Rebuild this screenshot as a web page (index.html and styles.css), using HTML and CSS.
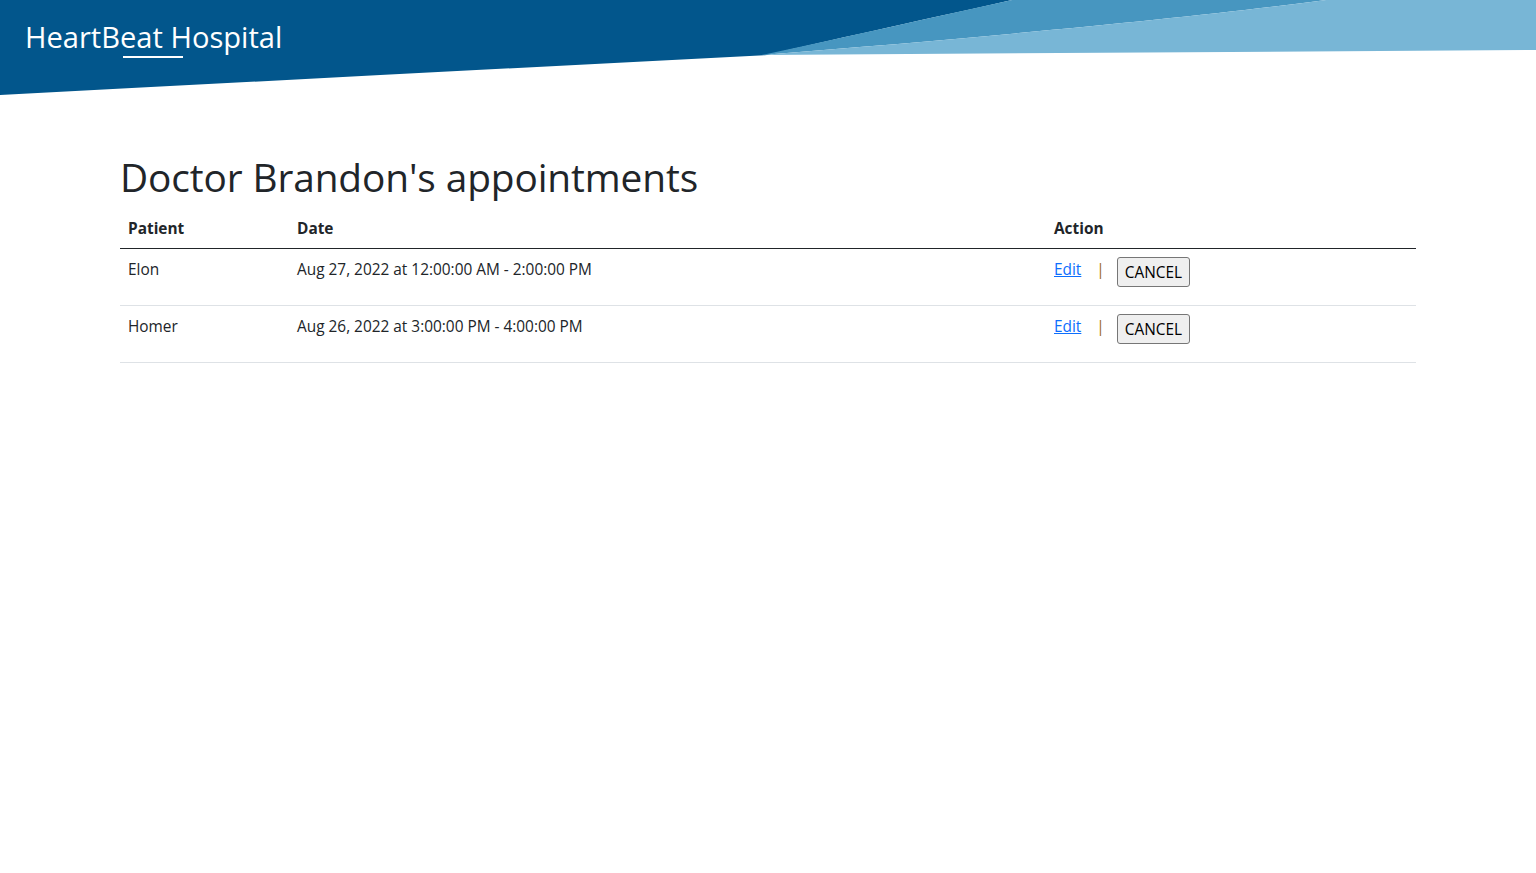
FILE: index.html
```html
<!DOCTYPE html>
<html lang="en">
<head>
<meta charset="utf-8">
<title>HeartBeat Hospital</title>
<link rel="stylesheet" href="styles.css">
</head>
<body>
<header class="site-header">
  <svg class="header-bg" viewBox="0 0 1536 96" preserveAspectRatio="none" aria-hidden="true">
    <path fill="#02568c" d="M0,0 H1012 C905,24 830,40 767,55 Q380,75 0,95 Z"/>
    <path fill="#4796c0" d="M1012,0 H1326 C1200,17 1000,36 762,55 C850,36 930,18 1012,0 Z"/>
    <path fill="#78b6d6" d="M1326,0 H1536 V50 L762,55 C1000,36 1200,17 1326,0 Z"/>
  </svg>
  <a class="brand" href="#">HeartBeat Hospital<span class="brand-bar"></span></a>
</header>
<main class="container">
  <h1 class="page-title">Doctor Brandon's appointments</h1>
  <table class="appt-table">
    <thead>
      <tr>
        <th class="col-patient">Patient</th>
        <th class="col-date">Date</th>
        <th class="col-action">Action</th>
      </tr>
    </thead>
    <tbody>
      <tr>
        <td>Elon</td>
        <td>Aug 27, 2022 at 12:00:00 AM - 2:00:00 PM</td>
        <td><div class="actions"><a href="#" class="edit-link">Edit</a><span class="sep">|</span><button class="cancel-btn" type="button">CANCEL</button></div></td>
      </tr>
      <tr>
        <td>Homer</td>
        <td>Aug 26, 2022 at 3:00:00 PM - 4:00:00 PM</td>
        <td><div class="actions"><a href="#" class="edit-link">Edit</a><span class="sep">|</span><button class="cancel-btn" type="button">CANCEL</button></div></td>
      </tr>
    </tbody>
  </table>
</main>
</body>
</html>
```
FILE: styles.css
```css
* { box-sizing: border-box; }
html, body { margin: 0; padding: 0; }
body {
  font-family: "Open Sans", "Noto Sans", sans-serif;
  font-size: 15.4px;
  line-height: 24px;
  color: #212529;
  background: #fff;
}
.site-header {
  position: relative;
  height: 96px;
  display: flex;
  align-items: flex-start;
  padding: 17px 25px 0;
}
.header-bg {
  position: absolute;
  left: 0;
  top: 0;
  width: 100%;
  height: 96px;
  display: block;
}
.brand {
  position: relative;
  color: #fff;
  text-decoration: none;
  font-size: 29.1px;
  line-height: 40px;
}
.brand-bar {
  position: absolute;
  left: 98px;
  top: 39px;
  width: 60px;
  height: 2px;
  background: #fff;
}
.container {
  width: 1296px;
  margin: 0 auto;
  padding-top: 58px;
}
.page-title {
  margin: 0 0 8px 0;
  font-size: 38.8px;
  font-weight: 400;
  line-height: 46px;
  letter-spacing: -0.1px;
}
.appt-table {
  width: 100%;
  border-collapse: collapse;
}
.appt-table th {
  text-align: left;
  font-weight: 700;
  padding: 9px 8px 7px;
  height: 40px;
  border-bottom: 1px solid #212529;
}
.col-patient { width: 169px; }
.col-date { width: 757px; }
.appt-table td {
  padding: 9px 8px 7px;
  height: 57px;
  vertical-align: top;
  border-bottom: 1px solid #dee2e6;
}
.actions {
  display: flex;
  align-items: flex-start;
}
.edit-link {
  color: #0d6efd;
  text-decoration: underline;
}
.sep {
  margin: 0 12px 0 15px;
  color: #9a6a20;
}
.cancel-btn {
  font-family: "Open Sans", "Noto Sans", sans-serif;
  font-size: 15.4px;
  color: #000;
  background: #efefef;
  border: 1px solid #767676;
  border-radius: 3px;
  height: 30px;
  padding: 0 7px;
  margin: -1px 0 0 0;
}
```
